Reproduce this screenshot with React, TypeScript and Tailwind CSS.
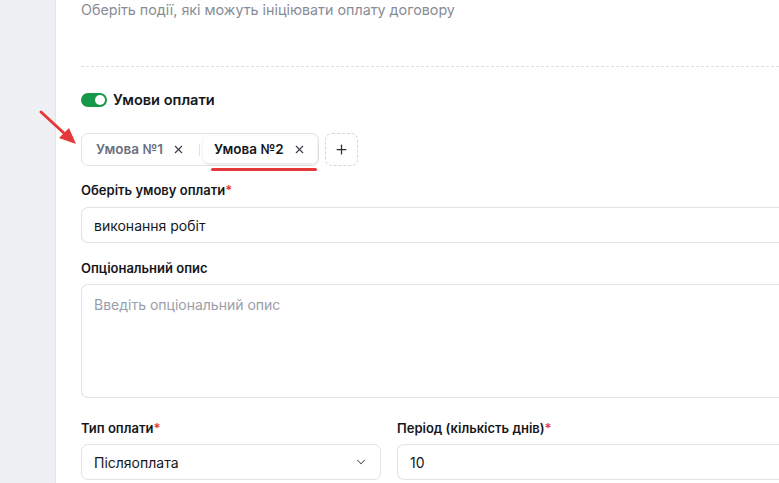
import { X, Plus, ChevronDown } from "lucide-react";

export default function App() {
  return (
    <div className="relative flex h-[483px] w-[779px] overflow-hidden bg-white font-['Inter',sans-serif] text-[#1f2128]">
      {/* Sidebar strip */}
      <div className="w-[56px] shrink-0 border-r border-[#e3e5ea] bg-[#eef0f4]" />

      {/* Main */}
      <div className="flex-1 pl-[25px]">
        <p className="text-[14.3px] leading-[20px] text-[#878c96]">
          Оберіть події, які можуть ініціювати оплату договору
        </p>

        <div className="mt-[46px] border-t border-dashed border-[#dcdfe4]" />

        {/* Toggle */}
        <div className="mt-[23px] flex items-center gap-[6px]">
          <div className="flex h-[14px] w-[26px] items-center justify-end rounded-full bg-[#17994a] px-[2px]">
            <div className="h-[10px] w-[10px] rounded-full bg-white" />
          </div>
          <span className="text-[14.6px] font-semibold leading-[20px] text-[#15171c]">Умови оплати</span>
        </div>

        {/* Tabs */}
        <div className="mt-[23px] flex items-center gap-[6px]">
          <div className="relative flex h-[33px] items-center rounded-[7px] border border-[#dfe2e7] bg-white pl-[2px] pr-[1px]">
            <div className="flex h-[26px] items-center gap-[9px] pl-[12px] pr-[11px] text-[13.5px] font-semibold text-[#6b7080]">
              Умова №1
              <X className="h-[13px] w-[13px] text-[#3a3d45]" strokeWidth={2} />
            </div>
            <div className="mx-[3px] h-[12px] w-px bg-[#dfe2e7]" />
            <div className="flex h-[27px] items-center gap-[9px] rounded-[5px] bg-white pl-[11px] pr-[11px] text-[13.5px] font-semibold text-[#15171c] shadow-[0_1px_3px_rgba(0,0,0,0.12)]">
              Умова №2
              <X className="h-[13px] w-[13px] text-[#3a3d45]" strokeWidth={2} />
            </div>
            <div className="absolute left-[129px] top-[34px] h-[3px] w-[106px] rounded-full bg-[#e5383b]" />
          </div>
          <button className="flex h-[33px] w-[33px] items-center justify-center rounded-[7px] border border-dashed border-[#d3d6dc] text-[#2b2e35]">
            <Plus className="h-[15px] w-[15px]" strokeWidth={2} />
          </button>
        </div>

        {/* Condition */}
        <label className="mt-[15px] block text-[13px] font-semibold leading-[18px] text-[#15171c]">
          Оберіть умову оплати<span className="text-[#e5383b]">*</span>
        </label>
        <div className="mt-[8px] flex h-[36px] items-center rounded-l-[7px] border border-r-0 border-[#dfe2e7] pl-[12px] text-[14px] text-[#15171c]">
          виконання робіт
        </div>

        <label className="mt-[16px] block text-[13px] font-semibold leading-[18px] text-[#15171c]">
          Опціональний опис
        </label>
        <div className="mt-[7px] h-[114px] rounded-l-[7px] border border-r-0 border-[#dfe2e7] px-[12px] pt-[10px] text-[14px] leading-[20px] text-[#9a9ea8]">
          Введіть опціональний опис
        </div>

        {/* Bottom row */}
        <div className="mt-[21px] flex gap-[16px]">
          <div className="w-[300px] shrink-0">
            <label className="block text-[13px] font-semibold leading-[18px] text-[#15171c]">
              Тип оплати<span className="text-[#e5383b]">*</span>
            </label>
            <div className="mt-[7px] flex h-[36px] items-center justify-between rounded-[7px] border border-[#dfe2e7] px-[12px] text-[14px] text-[#15171c]">
              Післяоплата
              <ChevronDown className="h-[14px] w-[14px] text-[#4a4e57]" strokeWidth={1.75} />
            </div>
          </div>
          <div className="flex-1">
            <label className="block text-[13px] font-semibold leading-[18px] text-[#15171c]">
              Період (кількість днів)<span className="text-[#e5383b]">*</span>
            </label>
            <div className="mt-[7px] flex h-[36px] items-center rounded-l-[7px] border border-r-0 border-[#dfe2e7] pl-[12px] text-[14px] text-[#15171c]">
              10
            </div>
          </div>
        </div>
      </div>

      {/* Annotation arrow */}
      <svg className="absolute left-[38px] top-[109px]" width="42" height="40" viewBox="0 0 42 40">
        <line x1="3" y1="3" x2="28" y2="26" stroke="#e5383b" strokeWidth="3" strokeLinecap="round" />
        <polygon points="38,35 21,29 31,19" fill="#e5383b" />
      </svg>
    </div>
  );
}
